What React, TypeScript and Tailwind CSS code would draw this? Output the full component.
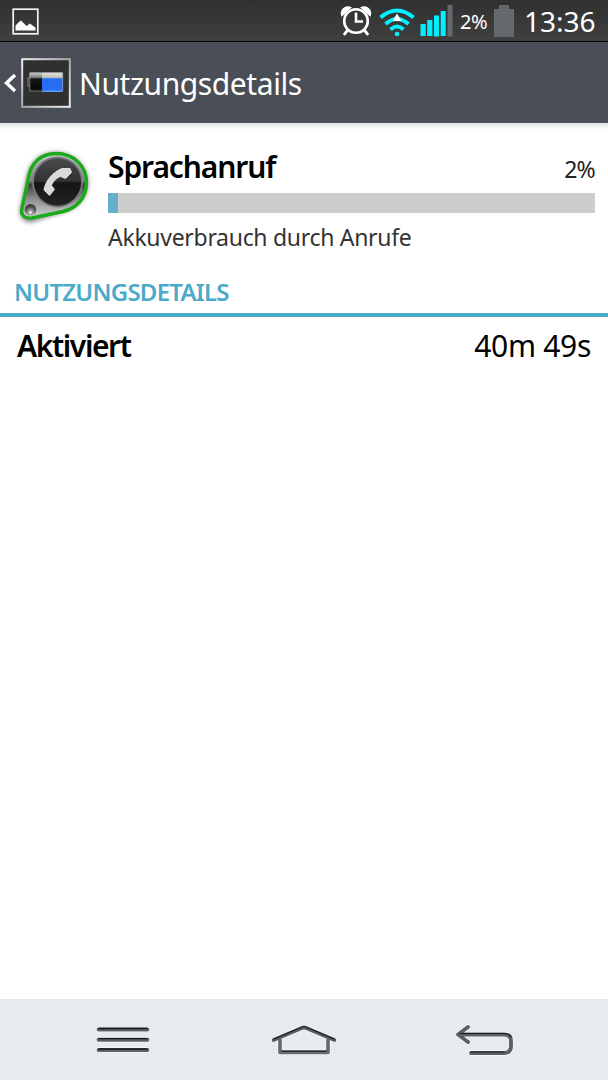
function GalleryIcon() {
  return (
    <svg width="28" height="28" viewBox="0 0 28 28" fill="none">
      <rect x="1.2" y="1.2" width="24.6" height="24.6" stroke="#f4f4f4" strokeWidth="1.7" />
      <path d="M3.500 22.500V17.500L7 14L9 12.500L11.500 15L14.500 18L18 15.500L20.500 17.500L23.500 19.500V22.500Z" fill="#fff" />
    </svg>
  );
}

function AlarmIcon() {
  return (
    <svg width="32" height="32" viewBox="0 0 32 32" fill="none" stroke="#fff">
      <circle cx="16" cy="16" r="11.800" strokeWidth="2.600" />
      <path d="M16 7.500V16.500H23" strokeWidth="2.600" />
      <path d="M2 10.500C0 5 5 0.500 10.500 2.500Z M30 10.500C32 5 27 0.500 21.500 2.500Z" fill="#fff" strokeWidth="1.500" />
      <path d="M7 26L4.500 29M25 26L27.500 29" strokeWidth="2.800" strokeLinecap="round" />
    </svg>
  );
}

function WifiIcon() {
  return (
    <svg width="36" height="30" viewBox="0 0 36 30" fill="none" stroke="#00f0ff" strokeWidth="4">
      <path d="M1.5 9.500Q18 -4.500 34.5 9.500M6.500 16Q18 6 29.500 16M11.500 21.500Q18 15.500 24.500 21.500" />
      <circle cx="18" cy="26" r="2.300" fill="#00f0ff" stroke="none" />
      <path d="M18 5.500L22.500 13H13.500Z" fill="#fff" stroke="none" />
    </svg>
  );
}

function SignalIcon() {
  return (
    <svg width="33" height="32" viewBox="0 0 33 32">
      <path d="M.5 19h5.200v12H.5zM7.200 15h5.200v16H7.200zM14 10.500h5v21h-5zM20.700 6h5v25h-5z" fill="#00f0ff" />
      <path d="M27.500 0h5v31.500h-5z" fill="#65696d" />
    </svg>
  );
}

function BatteryAppIcon() {
  return (
    <svg width="50" height="50" viewBox="0 0 50 50">
      <defs>
        <linearGradient id="frame" x1="0" y1="0" x2="1" y2="1">
          <stop stopColor="#eee" /><stop offset=".5" stopColor="#a5a6a8" /><stop offset="1" stopColor="#eee" />
        </linearGradient>
        <linearGradient id="cellDark" x1="0" y1="0" x2="0" y2="1">
          <stop stopColor="#777" /><stop offset=".08" stopColor="#bfbfbf" /><stop offset=".28" stopColor="#777" /><stop offset=".34" stopColor="#151515" /><stop offset=".85" stopColor="#090909" /><stop offset="1" stopColor="#666" />
        </linearGradient>
        <linearGradient id="cellBlue" x1="0" y1="0" x2="0" y2="1">
          <stop stopColor="#777" /><stop offset=".08" stopColor="#e0e0d8" /><stop offset=".28" stopColor="#b8bcb8" /><stop offset=".34" stopColor="#246df1" /><stop offset=".88" stopColor="#2b6cf6" /><stop offset="1" stopColor="#72a7ff" />
        </linearGradient>
      </defs>
      <rect x="1.2" y="1.2" width="47.6" height="47.6" fill="#303030" stroke="url(#frame)" strokeWidth="2" />
      <path d="M9 20H7v8h2" fill="#111" stroke="#999" />
      <rect x="8.5" y="14" width="13" height="20" rx="1" fill="url(#cellDark)" />
      <rect x="21" y="14" width="21" height="20" rx="1" fill="url(#cellBlue)" />
      <path d="M8.800 15V33M41.700 15V33" stroke="#999" strokeWidth=".8" />
    </svg>
  );
}

function CallIcon() {
  return (
    <svg width="90" height="90" viewBox="0 0 90 90" fill="none">
      <defs>
        <linearGradient id="metal" x1="0" y1="0" x2="0" y2="1">
          <stop stopColor="#c5c7c9" /><stop offset=".42" stopColor="#858789" /><stop offset=".48" stopColor="#3b3d3f" /><stop offset=".7" stopColor="#8b8d8f" /><stop offset="1" stopColor="#d2d4d6" />
        </linearGradient>
        <linearGradient id="face" x1="0" y1="0" x2="0" y2="1">
          <stop stopColor="#484a4c" /><stop offset=".48" stopColor="#303234" /><stop offset=".52" stopColor="#141516" /><stop offset="1" stopColor="#222426" />
        </linearGradient>
        <radialGradient id="rivet" cx=".5" cy=".75">
          <stop stopColor="#fff" /><stop offset=".4" stopColor="#999" /><stop offset="1" stopColor="#444" />
        </radialGradient>
        <filter id="shade" x="-20%" y="-20%" width="140%" height="140%"><feGaussianBlur stdDeviation="2" /></filter>
      </defs>
      <path d="M17.5 33C20 18 31 8.500 45 8.500C63 8.500 77 21 77 38C77 52 67 63 53 66L21 76C14 76.500 9.500 70 11.500 63Z" fill="#555" stroke="#555" strokeWidth="3" opacity=".65" filter="url(#shade)" />
      <path d="M18.500 32C21 18 31 8.500 46 8.500C64 8.500 76.500 21 76.500 38C76.500 52 67 63.500 53 66.500L22 73C15 74 10 70 12 63Z" fill="url(#metal)" stroke="#19ab18" strokeWidth="3.400" />
      <circle cx="47.500" cy="37" r="25.500" fill="#777a7c" />
      <circle cx="47.500" cy="37" r="23.700" fill="url(#face)" />
      <circle cx="20.500" cy="64.500" r="6" fill="url(#rivet)" stroke="#b9b9b9" strokeWidth=".7" />
      <path d="M60 23.500L52 23.500C43 27 35 36 34 45L39.500 50.500L44.500 44.500L41.500 40.500C42.500 37 47 32.500 50.500 31.500L55.500 33.500L61.500 27.500Z" fill="#d8dadb" stroke="#d8dadb" strokeLinejoin="round" />
    </svg>
  );
}

function MenuIcon() {
  return (
    <svg width="56" height="32" viewBox="0 0 56 32" strokeLinecap="round">
      <path d="M2.500 5.500H51.500M2.500 15.700H51.500M2.500 26H51.500" stroke="#fff" strokeWidth="5" />
      <path d="M2.500 5.500H51.500M2.500 15.700H51.500M2.500 26H51.500" stroke="#5e6265" strokeWidth="3.900" />
      <path d="M3 4.500H51M3 14.700H51M3 25H51" stroke="#17191a" strokeWidth="1.300" />
    </svg>
  );
}

function HomeIcon() {
  return (
    <svg width="68" height="34" viewBox="0 0 68 34" fill="none" strokeLinecap="round" strokeLinejoin="round">
      <path d="M3.500 17L32 5Q34 4 36 5L64.500 17M10 17V29.300H58V17" stroke="#fff" strokeWidth="5" />
      <path d="M10 17V29.300H58V17" stroke="#686b6e" strokeWidth="3.700" />
      <path d="M3.500 17L32 5Q34 4 36 5L64.500 17" stroke="#5d6063" strokeWidth="3.800" />
      <path d="M4 16L32 4Q34 3 36 4L64 16M12 28.100H56" stroke="#1b1d1e" strokeWidth="1.200" />
    </svg>
  );
}

function BackIcon() {
  return (
    <svg width="62" height="34" viewBox="0 0 62 34" fill="none" strokeLinecap="round" strokeLinejoin="round">
      <path d="M14 4L4 11.500L14 19M5 11.500H50Q57 11.500 57 18V23Q57 30 50 30H17" stroke="#fff" strokeWidth="5" />
      <path d="M14 4L4 11.500L14 19M5 11.500H50Q57 11.500 57 18V23Q57 30 50 30H17" stroke="#5d6063" strokeWidth="3.900" />
      <path d="M6 10.500H50Q56 10.500 57 14M17 29H50" stroke="#181a1b" strokeWidth="1.200" />
    </svg>
  );
}

export default function App() {
  return (
    <main className="flex h-[1080px] w-[608px] flex-col overflow-hidden bg-white font-['Noto_Sans',sans-serif]">
      <header className="shrink-0">
        <div className="flex h-[42px] items-start border-b border-black bg-linear-to-b from-[#303030] to-[#404040] text-white">
          <div className="ml-[12px] mt-[8px]"><GalleryIcon /></div>
          <div className="ml-[300px] mt-[5px]"><AlarmIcon /></div>
          <div className="ml-[7px] mt-[8px]"><WifiIcon /></div>
          <div className="ml-[5px] mt-[5px]"><SignalIcon /></div>
          <span className="ml-[7px] mt-[10px] w-[28px] whitespace-nowrap text-[20px] leading-[24px] tracking-[-0.4px]">2%</span>
          <svg className="ml-[6px] mt-[5px]" width="20" height="32" viewBox="0 0 20 32"><path d="M0 4H5V0H15V4H20V32H0Z" fill="#65696d" /></svg>
          <span className="ml-[10px] mt-[3px] whitespace-nowrap text-[28px] leading-[36px]">13:36</span>
        </div>
        <div className="flex h-[81px] items-center bg-[#4a4e56]">
          <svg className="ml-[4px]" width="13" height="20" viewBox="0 0 13 20" fill="none"><path d="M11 2L2.500 10L11 18" stroke="#fff" strokeWidth="3.500" /></svg>
          <div className="ml-[4px]"><BatteryAppIcon /></div>
          <h1 className="ml-[8px] whitespace-nowrap pt-[2px] text-[30px] leading-[40px] tracking-[-0.42px] text-white">Nutzungsdetails</h1>
        </div>
        <div className="h-[10px] bg-linear-to-b from-[#dfe1e3] via-[#f8f8f8] to-white" />
      </header>

      <section className="flex h-[137px] shrink-0 pt-[12px]">
        <div className="ml-[10px] w-[90px]"><CallIcon /></div>
        <div className="ml-[8px] w-[487px]">
          <div className="flex h-[48px] items-start justify-between">
            <h2 className="whitespace-nowrap pt-[2px] text-[30px] font-semibold leading-[40px] tracking-[-1.1px] text-black">Sprachanruf</h2>
            <span className="whitespace-nowrap pt-[8px] text-[23px] leading-[32px] tracking-[-0.7px] text-[#222]">2%</span>
          </div>
          <div className="h-[20px] bg-[#cdcdcd]"><div className="h-full w-[10px] bg-[#67aeca]" /></div>
          <p className="mt-[8px] whitespace-nowrap text-[23px] leading-[32px] tracking-[-0.3px] text-[#333]">Akkuverbrauch durch Anrufe</p>
        </div>
      </section>

      <section className="grow">
        <h3 className="h-[47px] border-b-[4px] border-[#4baac9] pl-[14px] pt-[6px] text-[24px] font-semibold leading-[32px] tracking-[-0.77px] text-[#4baac9]">NUTZUNGSDETAILS</h3>
        <div className="flex items-center justify-between pl-[17px] pr-[17px] pt-[9px] text-[30px] leading-[40px] text-black">
          <span className="font-semibold tracking-[-1.4px]">Aktiviert</span>
          <span className="tracking-[-0.3px]">40m 49s</span>
        </div>
      </section>

      <nav className="flex h-[81px] shrink-0 items-center bg-[#e8ebee]">
        <button className="ml-[96px]"><MenuIcon /></button>
        <button className="ml-[118px]"><HomeIcon /></button>
        <button className="ml-[116px]"><BackIcon /></button>
      </nav>
    </main>
  );
}
